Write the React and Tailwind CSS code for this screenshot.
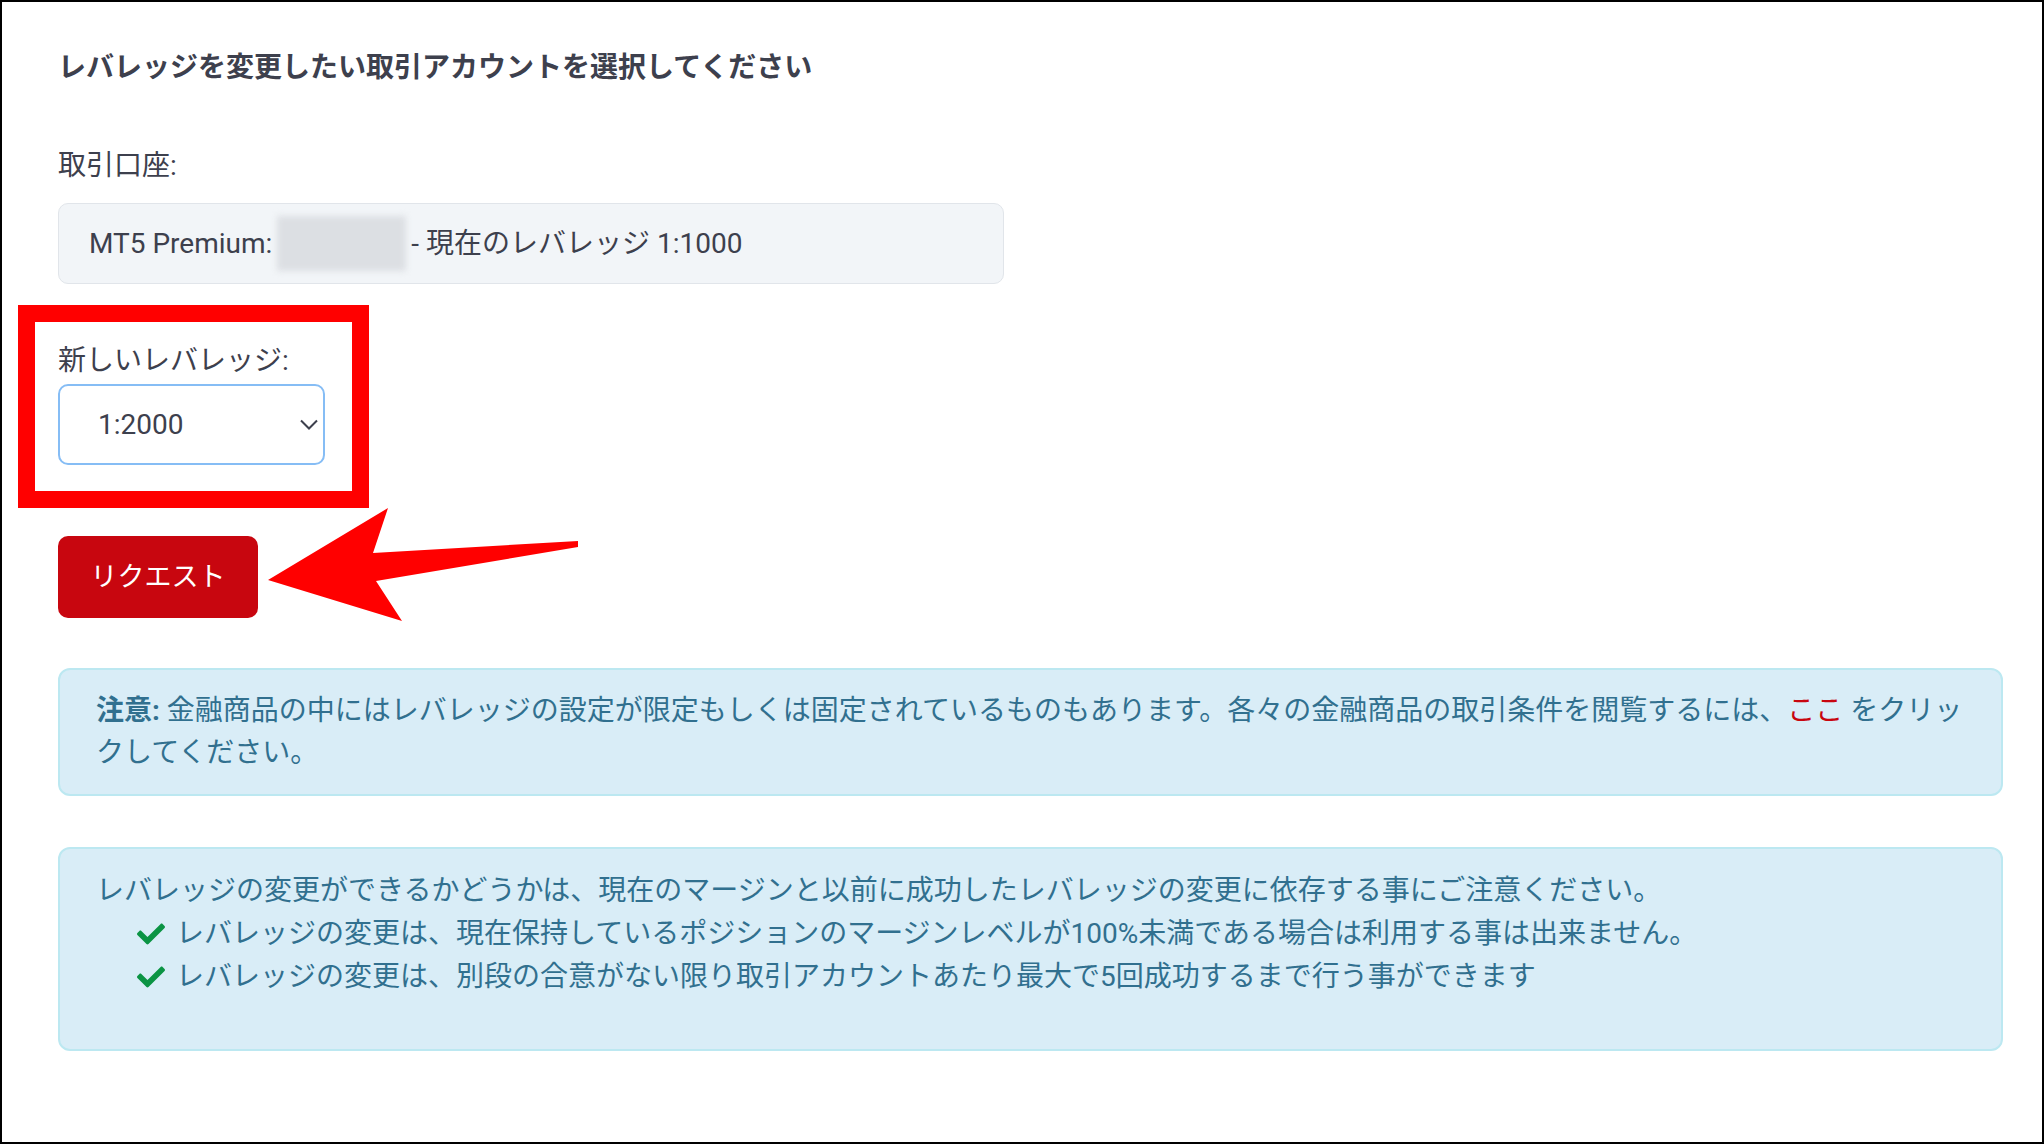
import { FaCheck } from 'react-icons/fa';

const font = { fontFamily: 'Roboto, "Noto Sans CJK JP", sans-serif' };

function CheckItem({ children }) {
  return (
    <li className="flex items-center">
      <FaCheck className="w-[28px] h-[28px] text-[#0b9444] mr-[11px] shrink-0" />
      <span>{children}</span>
    </li>
  );
}

export default function App() {
  return (
    <div lang="ja" style={font} className="relative w-[2044px] h-[1144px] border-2 border-black bg-white text-[#3d404d] text-[28px] overflow-hidden">
      <div className="flex flex-col pl-[56px] pr-[39px] pt-[46px]">
        <h2 className="font-bold leading-[40px]">レバレッジを変更したい取引アカウントを選択してください</h2>

        <div className="mt-[58px] leading-[40px]">取引口座:</div>
        <div className="mt-[17px] w-[946px] h-[81px] flex items-center pl-[30px] rounded-[10px] border border-[#e1e5ea] bg-[#f2f5f8]">
          <span>MT5 Premium:</span>
          <span className="inline-block w-[129px] h-[55px] mx-[5px] bg-[#dcdfe3] blur-[3px]" />
          <span>- 現在のレバレッジ 1:1000</span>
        </div>

        <div className="mt-[57px] leading-[40px]">新しいレバレッジ:</div>
        <div className="mt-[3px] w-[267px] h-[81px] flex items-center justify-between pl-[38px] pr-[5px] rounded-[10px] border-2 border-[#86bdf5] bg-white">
          <span>1:2000</span>
          <svg width="18" height="11" viewBox="0 0 18 11" fill="none" stroke="#3d404d" strokeWidth="2">
            <path d="M1 1.5l8 8 8-8" />
          </svg>
        </div>

        <button className="mt-[71px] w-[200px] h-[82px] rounded-[10px] bg-[#c8060f] text-white text-[27px]">リクエスト</button>

        <div className="mt-[50px] w-full rounded-[12px] border-2 border-[#bce8f1] bg-[#d9edf7] text-[#31708f] pl-[36px] pr-[30px] py-[20px] leading-[42px]">
          <strong className="font-bold">注意:</strong> 金融商品の中にはレバレッジの設定が限定もしくは固定されているものもあります。各々の金融商品の取引条件を閲覧するには、<span className="text-[#c8060f]">ここ</span> をクリックしてください。
        </div>

        <div className="mt-[51px] w-full rounded-[12px] border-2 border-[#bce8f1] bg-[#d9edf7] text-[#31708f] pl-[36px] pr-[30px] pt-[20px] pb-[51px] leading-[43px]">
          <p>レバレッジの変更ができるかどうかは、現在のマージンと以前に成功したレバレッジの変更に依存する事にご注意ください。</p>
          <ul className="pl-[41px]">
            <CheckItem>レバレッジの変更は、現在保持しているポジションのマージンレベルが100%未満である場合は利用する事は出来ません。</CheckItem>
            <CheckItem>レバレッジの変更は、別段の合意がない限り取引アカウントあたり最大で5回成功するまで行う事ができます</CheckItem>
          </ul>
        </div>
      </div>

      {/* highlight frame around the leverage picker */}
      <div className="absolute left-[16px] top-[303px] w-[351px] h-[203px] border-[17px] border-[#ff0000]" />

      {/* pointer arrow toward the request button */}
      <svg className="absolute left-[264px] top-[504px]" width="316" height="120" viewBox="0 0 316 120">
        <polygon points="2,74 122,2 107,47 312,35 312,41 110,75 136,115" fill="#ff0000" />
      </svg>
    </div>
  );
}
